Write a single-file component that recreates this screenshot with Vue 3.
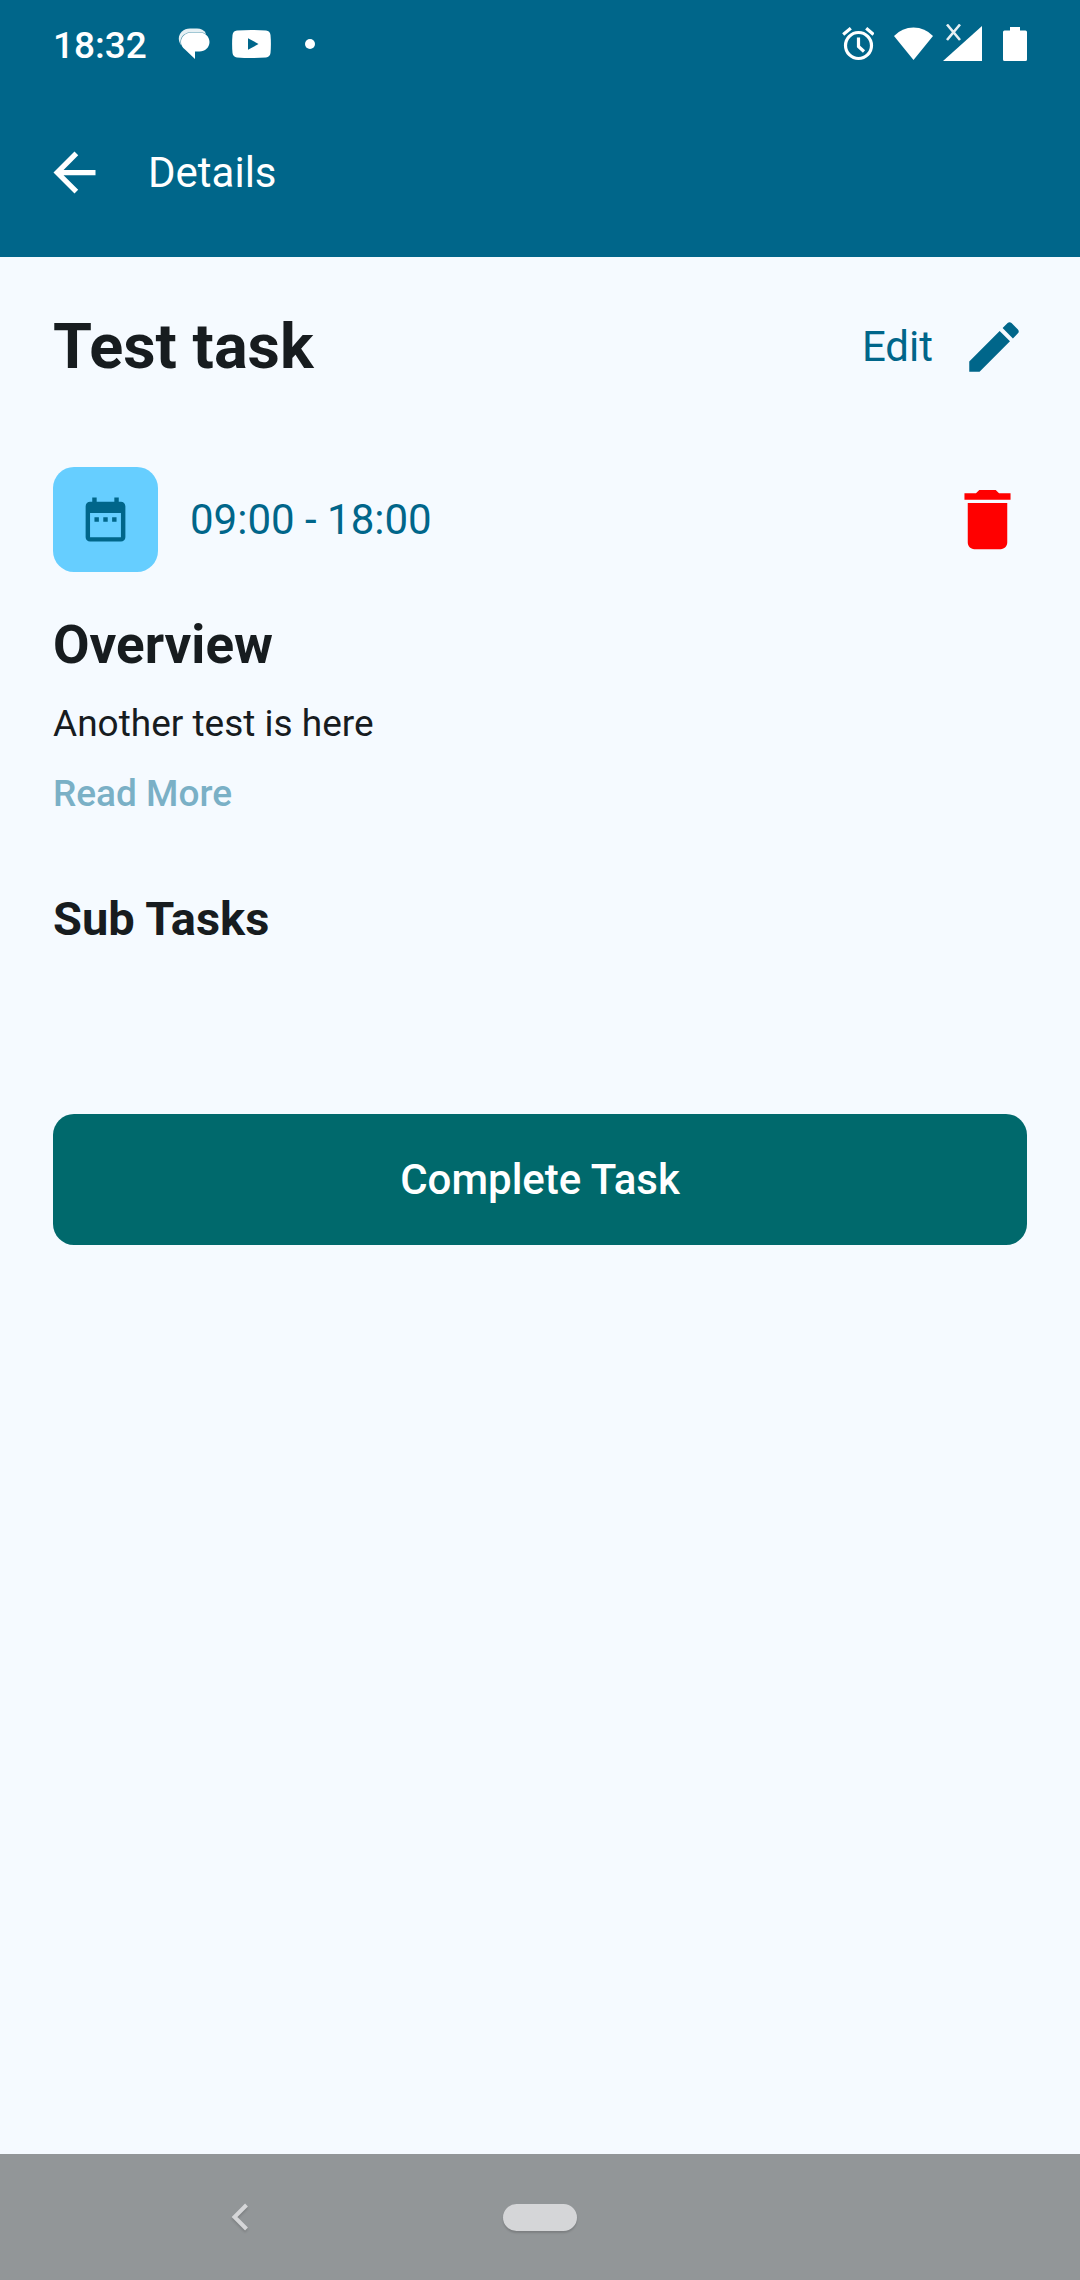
<script setup>
import { ref } from 'vue'

const task = ref({
  title: 'Test task',
  time: '09:00 - 18:00',
  overview: 'Another test is here',
})
</script>

<template>
  <div class="screen">
    <header class="top">
      <div class="status">
        <span class="clock">18:32</span>
        <svg class="chat" width="32" height="32" viewBox="0 0 32 32" aria-hidden="true">
          <path fill="#fff" fill-opacity=".9" d="M3 17C-2.500 9 3 .4 12 .4h7c4 0 7 1.600 9 5.100L16 12z" />
          <path fill="#fff" stroke="#00668a" stroke-opacity=".7" stroke-width="1.200" paint-order="stroke" d="M13.500 4.500h8C27 4.500 31.500 8.500 31.500 14S27 23.500 21.500 23.500H17V31L7 21.500C4.500 19.500 3 17 3 14c0-5.500 5-9.500 10.500-9.500z" />
        </svg>
        <svg class="video" width="39" height="28" viewBox="0 0 39 28" aria-hidden="true">
          <path fill="#fff" fill-rule="evenodd" d="M5 .6Q19.500-.5 34 .6q4 .4 4.500 4.400.8 9 0 18-.5 4-4.500 4.400Q19.500 28.500 5 27.400 1 27 .5 23-.3 14 .5 5 1 1 5 .6zM16 8.200v11.600L26.500 14z" />
        </svg>
        <span class="dot"></span>
        <div class="indicators">
          <svg width="32" height="34" viewBox="0 0 32 34" fill="none" stroke="#fff" aria-hidden="true">
            <circle cx="16.500" cy="18.500" r="13" stroke-width="3.200" />
            <path stroke-width="3.200" d="M16.500 10.500v9l5.500 5M1.200 7.500l7.600-6.300M24.200 1.200l7.300 6.300" />
          </svg>
          <svg width="39" height="34" viewBox="0 0 39 34" aria-hidden="true">
            <path fill="#fff" d="M0 9Q8 0.500 19.500 0.500T39 9L19.500 33z" />
          </svg>
          <svg width="40" height="40" viewBox="0 0 40 40" aria-hidden="true">
            <path fill="#fff" d="M39 2v35H0z" />
            <path fill="none" stroke="#e6eff3" stroke-width="2.600" d="M4 .5l13 15.500M17 .5L4 16" />
          </svg>
          <svg width="24" height="34" viewBox="0 0 24 34" aria-hidden="true">
            <path fill="#fff" d="M7 0h10v3.500h5.500Q24 3.500 24 5v27.500q0 1.500-1.500 1.500h-21Q0 34 0 32.500V5q0-1.500 1.500-1.500H7z" />
          </svg>
        </div>
      </div>
      <div class="appbar">
        <button class="icon-button" type="button" aria-label="Back">
          <svg width="63" height="63" viewBox="0 0 24 24" fill="currentColor" aria-hidden="true">
            <path d="M20 11H7.830l5.590-5.590L12 4l-8 8 8 8 1.410-1.410L7.830 13H20v-2z" />
          </svg>
        </button>
        <span class="appbar-title">Details</span>
      </div>
    </header>

    <main class="content">
      <div class="title-row">
        <h1>{{ task.title }}</h1>
        <button class="edit" type="button">
          Edit
          <svg width="66" height="66" viewBox="0 0 24 24" fill="currentColor" aria-hidden="true">
            <path d="M3 17.250V21h3.750L17.810 9.940l-3.750-3.750L3 17.250zM20.710 7.040c.39-.39.39-1.020 0-1.410l-2.340-2.340c-.39-.39-1.020-.39-1.410 0l-1.830 1.830 3.750 3.750 1.830-1.830z" />
          </svg>
        </button>
      </div>

      <div class="time-row">
        <span class="tile">
          <svg width="53" height="53" viewBox="0 0 24 24" fill="currentColor" aria-hidden="true">
            <path d="M9 11H7v2h2v-2zm4 0h-2v2h2v-2zm4 0h-2v2h2v-2zm2-7h-1V2h-2v2H8V2H6v2H5c-1.110 0-1.990.9-1.990 2L3 20c0 1.100.89 2 2 2h14c1.100 0 2-.9 2-2V6c0-1.100-.9-2-2-2zm0 16H5V9h14v11z" />
          </svg>
        </span>
        <span class="time">{{ task.time }}</span>
        <button class="icon-button delete" type="button" aria-label="Delete task">
          <svg width="79" height="79" viewBox="0 0 24 24" fill="currentColor" aria-hidden="true">
            <path d="M6 19c0 1.100.9 2 2 2h8c1.100 0 2-.9 2-2V7H6v12zM19 4h-3.500l-1-1h-5l-1 1H5v2h14V4z" />
          </svg>
        </button>
      </div>

      <section class="overview">
        <h2>Overview</h2>
        <p>{{ task.overview }}</p>
        <a href="#">Read More</a>
      </section>

      <section class="subtasks">
        <h3>Sub Tasks</h3>
      </section>

      <button class="complete" type="button">Complete Task</button>
    </main>

    <nav class="system-nav">
      <button class="icon-button" type="button" aria-label="System back">
        <svg class="chevron" width="18" height="28" viewBox="0 0 18 28" aria-hidden="true">
          <path fill="none" stroke="#d5d6d8" stroke-width="4" d="M15.500 2L3.500 14l12 12" />
        </svg>
      </button>
      <button class="icon-button" type="button" aria-label="Home">
        <span class="pill"></span>
      </button>
    </nav>
  </div>
</template>

<style>
body {
  background: #f5faff;
}
</style>

<style scoped>
.screen {
  display: flex;
  flex-direction: column;
  min-height: 100vh;
  background: #f5faff;
  color: #171c1f;
  font-family: Roboto, sans-serif;
}

button {
  border: 0;
  padding: 0;
  background: none;
  color: inherit;
  font: inherit;
  cursor: pointer;
}

svg {
  display: block;
  flex: none;
}

h1,
h2,
h3,
p {
  margin: 0;
}

.icon-button {
  display: flex;
  align-items: center;
  justify-content: center;
}

.top {
  background: #00668a;
  color: #fff;
}

.status {
  display: flex;
  align-items: center;
  height: 88px;
  padding: 0 53px;
}

.clock {
  padding-top: 4px;
  font-size: 37px;
  font-weight: 500;
  line-height: 44px;
}

.chat {
  margin-left: 31px;
}

.video {
  margin-left: 22px;
}

.dot {
  width: 10px;
  height: 10px;
  margin-left: 34px;
  border-radius: 50%;
  background: #fff;
}

.indicators {
  display: flex;
  align-items: center;
  margin-left: auto;
}

.indicators svg + svg {
  margin-left: 20px;
}

.indicators svg:nth-child(3) {
  margin-left: 10px;
}

.appbar {
  display: flex;
  align-items: center;
  gap: 42px;
  height: 169px;
  padding: 0 43px;
}

.appbar-title {
  font-size: 42px;
  line-height: 50px;
}

.content {
  display: flex;
  flex-direction: column;
  padding: 53px;
}

.title-row,
.time-row {
  display: flex;
  align-items: center;
}

.title-row {
  justify-content: space-between;
}

h1 {
  font-size: 63px;
  font-weight: 700;
  line-height: 74px;
}

.edit {
  display: flex;
  align-items: center;
  gap: 28px;
  color: #00668a;
  font-size: 42px;
  line-height: 50px;
}

.time-row {
  gap: 32px;
  margin-top: 83px;
}

.tile {
  display: flex;
  align-items: center;
  justify-content: center;
  width: 105px;
  height: 105px;
  border-radius: 21px;
  background: #66ceff;
  color: #00668a;
}

.time {
  color: #00668a;
  font-size: 42px;
  line-height: 50px;
}

.delete {
  margin-left: auto;
  color: #f00;
}

.overview {
  display: flex;
  flex-direction: column;
  align-items: flex-start;
  gap: 26px;
  margin-top: 42px;
}

h2 {
  font-size: 53px;
  font-weight: 700;
  line-height: 62px;
}

.overview p,
.overview a {
  font-size: 37px;
  line-height: 44px;
}

.overview a {
  color: #7ab0c6;
  font-weight: 500;
  text-decoration: none;
}

.subtasks {
  min-height: 170px;
  margin-top: 75px;
}

h3 {
  font-size: 47px;
  font-weight: 700;
  line-height: 56px;
}

.complete {
  height: 131px;
  margin-top: 53px;
  border-radius: 21px;
  background: #00696c;
  color: #fff;
  font-size: 42px;
  font-weight: 500;
  line-height: 50px;
}

.system-nav {
  display: grid;
  grid-template-columns: repeat(3, 1fr);
  height: 126px;
  margin-top: auto;
  padding: 0 90px;
  background: #929698;
}

.chevron {
  filter: drop-shadow(0 2px 1px rgb(0 0 0 / 15%));
}

.pill {
  width: 74px;
  height: 27px;
  border-radius: 14px;
  background: #d5d6d8;
  box-shadow: 0 2px 2px rgb(0 0 0 / 15%);
}
</style>
